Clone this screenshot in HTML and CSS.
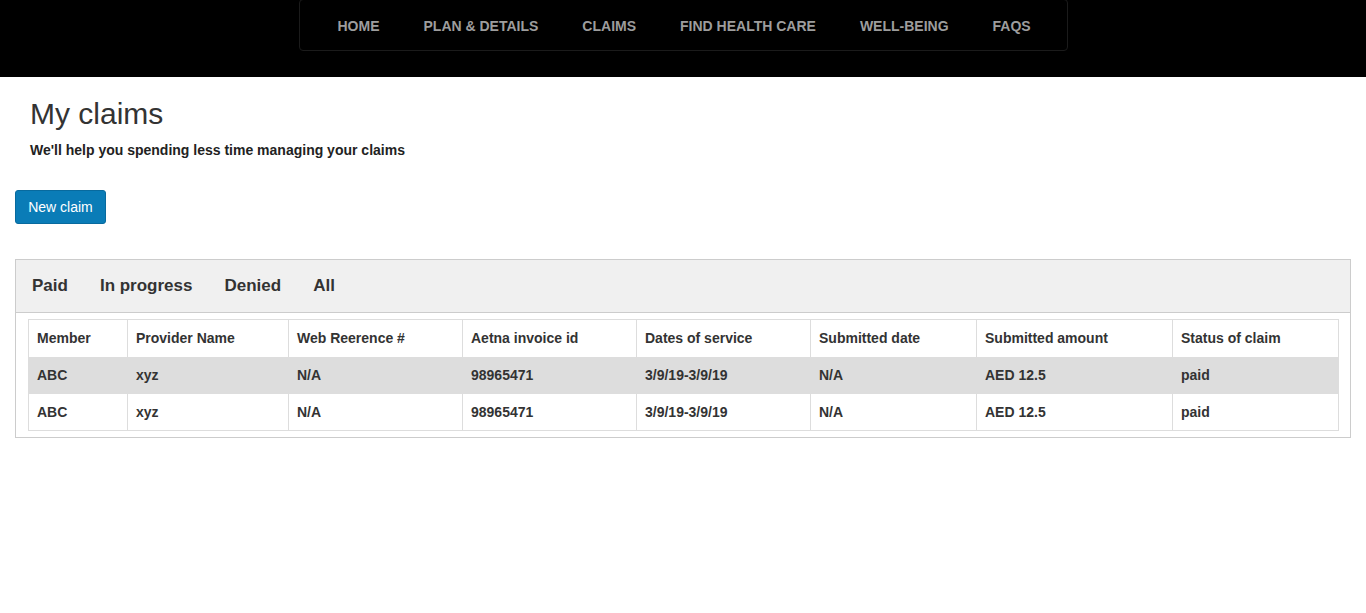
FILE: index.html
```html
<!DOCTYPE html>
<html>
<head>
<meta charset="utf-8">
<link rel="stylesheet" href="styles.css">
</head>
<body>
<header class="topbar">
  <nav class="nav">
    <a class="nav-item">HOME</a>
    <a class="nav-item">PLAN &amp; DETAILS</a>
    <a class="nav-item">CLAIMS</a>
    <a class="nav-item">FIND HEALTH CARE</a>
    <a class="nav-item">WELL-BEING</a>
    <a class="nav-item">FAQS</a>
  </nav>
</header>
<main class="content">
  <div class="intro">
    <h1 class="title">My claims</h1>
    <p class="subtitle">We'll help you spending less time managing your claims</p>
  </div>
  <button class="btn">New claim</button>
  <section class="panel">
    <div class="panel-head">
      <span class="tab">Paid</span>
      <span class="tab">In progress</span>
      <span class="tab">Denied</span>
      <span class="tab">All</span>
    </div>
    <div class="panel-body">
      <table class="claims">
        <thead>
          <tr>
            <th class="c1">Member</th>
            <th class="c2">Provider Name</th>
            <th class="c3">Web Reerence #</th>
            <th class="c4">Aetna invoice id</th>
            <th class="c5">Dates of service</th>
            <th class="c6">Submitted date</th>
            <th class="c7">Submitted amount</th>
            <th class="c8">Status of claim</th>
          </tr>
        </thead>
        <tbody>
          <tr class="striped">
            <td>ABC</td><td>xyz</td><td>N/A</td><td>98965471</td><td>3/9/19-3/9/19</td><td>N/A</td><td>AED 12.5</td><td>paid</td>
          </tr>
          <tr>
            <td>ABC</td><td>xyz</td><td>N/A</td><td>98965471</td><td>3/9/19-3/9/19</td><td>N/A</td><td>AED 12.5</td><td>paid</td>
          </tr>
        </tbody>
      </table>
    </div>
  </section>
</main>
</body>
</html>
```
FILE: styles.css
```css
* { box-sizing: border-box; }
html, body { margin: 0; padding: 0; background: #fff; }
body { font-family: "Liberation Sans", Arial, sans-serif; font-size: 14px; color: #333; }

.topbar { background: #000; height: 77px; display: flex; justify-content: center; }
.nav {
  display: flex; align-items: center;
  height: 52px; margin-top: -1px;
  width: 769px; padding: 0 16px;
  border: 1px solid #1b1b1b; border-radius: 4px;
}
.nav-item {
  color: #9d9d9d; font-weight: bold; font-size: 14px;
  padding: 0 22px; white-space: nowrap; line-height: 20px;
  margin-top: 1px;
}

.content { padding: 0 15px; }
.intro { padding: 0 15px; }
.title { margin: 0; padding-top: 19px; font-size: 30px; font-weight: normal; line-height: 36px; color: #333; }
.subtitle { margin: 8px 0 0; font-size: 14px; font-weight: bold; line-height: 20px; color: #222; }

.btn {
  margin-top: 30px; display: block;
  height: 34px; width: 91px; padding: 0;
  background: #0a7cb7; color: #fff; border: 1px solid #086a9e; border-radius: 3px;
  font-family: inherit; font-size: 14px;
}

.panel { margin-top: 35px; border: 1px solid #ccc; }
.panel-head {
  background: #f0f0f0; height: 53px; border-bottom: 1px solid #ccc;
  display: flex; align-items: center; padding: 0 16px; gap: 0;
}
.tab { font-size: 17px; font-weight: bold; color: #333; margin-right: 32px; }
.panel-body { padding: 6px 12px 6px; }

.claims { width: 100%; border-collapse: collapse; border: 1px solid #ddd; table-layout: fixed; }
.claims th, .claims td {
  border-left: 1px solid #ddd; border-right: 1px solid #ddd;
  text-align: left; font-weight: bold; font-size: 14px;
  padding: 0 8px; height: 37px; color: #333;
}
.claims thead th { height: 37px; }
.claims tbody tr { border-top: 1px solid #ddd; }
.claims tbody tr.striped { border-top: none; }
.claims tr.striped td { background: #ddd; border-left-color: #ddd; border-right-color: #ddd; }
.c1 { width: 99px; }
.c2 { width: 161px; }
.c3 { width: 174px; }
.c4 { width: 174px; }
.c5 { width: 174px; }
.c6 { width: 166px; }
.c7 { width: 196px; }
.c8 { width: 166px; }
```
